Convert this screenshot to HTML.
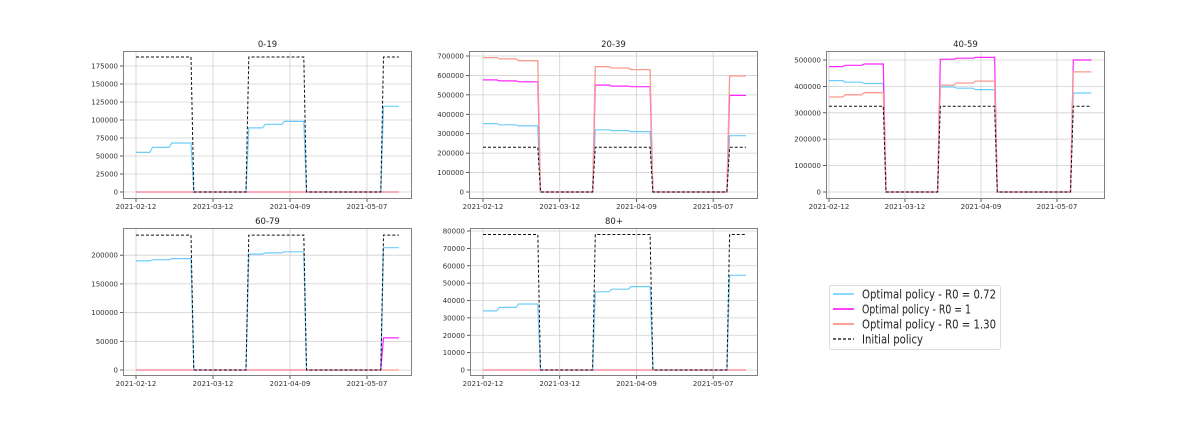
<!DOCTYPE html>
<html><head><meta charset="utf-8">
<style>
html,body{margin:0;padding:0;background:#fff;}
svg{display:block;font-family:"DejaVu Sans","Liberation Sans",sans-serif;}
</style></head>
<body>
<svg id="s" width="1196" height="423" viewBox="0 0 1196 423" xmlns="http://www.w3.org/2000/svg">
<rect width="1196" height="423" fill="#fff"/>
<g id="g"></g>
<g>
<rect x="829.5" y="285.5" width="171" height="64" rx="2" fill="#fff" stroke="#dcdcdc"/>
<line x1="833" y1="294" x2="854" y2="294" stroke="#66ccff" stroke-width="1.5"/>
<line x1="833" y1="309" x2="854" y2="309" stroke="#ff00ff" stroke-width="1.5"/>
<line x1="833" y1="324" x2="854" y2="324" stroke="#fa8072" stroke-width="1.5"/>
<line x1="833" y1="339" x2="854" y2="339" stroke="#000" stroke-width="1.2" stroke-dasharray="3,2"/>
<text x="862" y="298.5" font-size="12" fill="#222" textLength="134" lengthAdjust="spacingAndGlyphs">Optimal policy - R0 = 0.72</text>
<text x="862" y="313.5" font-size="12" fill="#222" textLength="109" lengthAdjust="spacingAndGlyphs">Optimal policy - R0 = 1</text>
<text x="862" y="328.5" font-size="12" fill="#222" textLength="134" lengthAdjust="spacingAndGlyphs">Optimal policy - R0 = 1.30</text>
<text x="862" y="343.5" font-size="12" fill="#222" textLength="61" lengthAdjust="spacingAndGlyphs">Initial policy</text>
</g>
</svg>
<script>
var NS="http://www.w3.org/2000/svg",G=document.getElementById("g");
function el(t,a,txt){var e=document.createElementNS(NS,t);for(var k in a)e.setAttribute(k,a[k]);if(txt!=null)e.textContent=txt;G.appendChild(e);return e;}
function ser(a,b,c,end){var p=[];for(var d=0;d<=Math.floor(end);d++){p.push([d,val(d)]);}p.push([end,val(end)]);return p;
 function val(d){if(d<=20)return d<6?a[0]:d<13?a[1]:a[2];if(d<=40)return 0;if(d<=61)return d<47?b[0]:d<54?b[1]:b[2];if(d<=89)return 0;return c;}}
var plots=[
 {t:"0-19",L:123,T:51,R:412,B:199,x0:136,pd:2.75,y0:192,sc:18/25000,yt:[0,25000,50000,75000,100000,125000,150000,175000],end:95.6,
  bl:[[55000,62000,68000],[89000,94000,98000],119000],mg:[[0,0,0],[0,0,0],0],rd:[[0,0,0],[0,0,0],0],bk:187500},
 {t:"20-39",L:469,T:51,R:758,B:199,x0:483,pd:2.74,y0:192,sc:136/700000,yt:[0,100000,200000,300000,400000,500000,600000,700000],end:96,
  bl:[[352000,346000,340000],[320000,316000,311000],290000],mg:[[577000,572000,567000],[550000,545000,542000],497000],rd:[[692000,685000,676000],[645000,638000,630000],597000],bk:230000},
 {t:"40-59",L:826,T:51,R:1105,B:199,x0:829,pd:2.714,y0:192,sc:132/500000,yt:[0,100000,200000,300000,400000,500000],end:96.7,
  bl:[[422000,416000,411000],[398000,393000,388000],375000],mg:[[475000,480000,485000],[503000,507000,510000],500000],rd:[[360000,368000,376000],[405000,413000,420000],455000],bk:325000},
 {t:"60-79",L:123,T:228,R:412,B:376,x0:136,pd:2.75,y0:370,sc:28.7/50000,yt:[0,50000,100000,150000,200000],end:95.6,
  bl:[[190000,192000,194000],[202000,204000,206000],213000],mg:[[0,0,0],[0,0,0],56000],rd:[[0,0,0],[0,0,0],0],bk:235000},
 {t:"80+",L:470,T:228,R:758,B:376,x0:483,pd:2.74,y0:370,sc:139/80000,yt:[0,10000,20000,30000,40000,50000,60000,70000,80000],end:96,
  bl:[[34000,36000,38000],[45000,46500,48000],54500],mg:[[0,0,0],[0,0,0],0],rd:[[0,0,0],[0,0,0],0],bk:78000}
];
var dates=["2021-02-12","2021-03-12","2021-04-09","2021-05-07"];
plots.forEach(function(P){
 el("rect",{x:P.L,y:P.T,width:P.R-P.L,height:P.B-P.T,fill:"#fff"});
 dates.forEach(function(d,i){var x=P.x0+i*28*P.pd;
  el("line",{x1:x,y1:P.T,x2:x,y2:P.B,stroke:"#d0d0d0","stroke-width":0.8});
  el("line",{x1:x,y1:P.B,x2:x,y2:P.B+3,stroke:"#333","stroke-width":0.8});
  el("text",{x:x,y:P.B+10,"font-size":7,"text-anchor":"middle",fill:"#333"},d);});
 P.yt.forEach(function(v){var y=P.y0-v*P.sc;
  el("line",{x1:P.L,y1:y,x2:P.R,y2:y,stroke:"#d0d0d0","stroke-width":0.8});
  el("line",{x1:P.L-3,y1:y,x2:P.L,y2:y,stroke:"#333","stroke-width":0.8});
  el("text",{x:P.L-5,y:y+2.5,"font-size":7,"text-anchor":"end",fill:"#333"},String(v));});
 function path(pts){return pts.map(function(p,i){return (i?"L":"M")+(P.x0+p[0]*P.pd).toFixed(1)+" "+(P.y0-p[1]*P.sc).toFixed(1);}).join(" ");}
 el("path",{d:path(ser(P.bl[0],P.bl[1],P.bl[2],P.end)),fill:"none",stroke:"#5ec6fb","stroke-width":1.2,opacity:0.9});
 el("path",{d:path(ser(P.mg[0],P.mg[1],P.mg[2],P.end)),fill:"none",stroke:"#ff00ff","stroke-width":1.2,opacity:0.85});
 el("path",{d:path(ser(P.rd[0],P.rd[1],P.rd[2],P.end)),fill:"none",stroke:"#f99a8e","stroke-width":1.3});
 var b=P.bk;el("path",{d:path(ser([b,b,b],[b,b,b],b,P.end)),fill:"none",stroke:"#111","stroke-width":1,"stroke-dasharray":"3,2"});
 el("rect",{x:P.L+0.5,y:P.T+0.5,width:P.R-P.L-1,height:P.B-P.T-1,fill:"none",stroke:"#808080","stroke-width":1});
 el("text",{x:(P.L+P.R)/2,y:P.T-4,"font-size":8.5,"text-anchor":"middle",fill:"#222"},P.t);
});
</script>
</body></html>
